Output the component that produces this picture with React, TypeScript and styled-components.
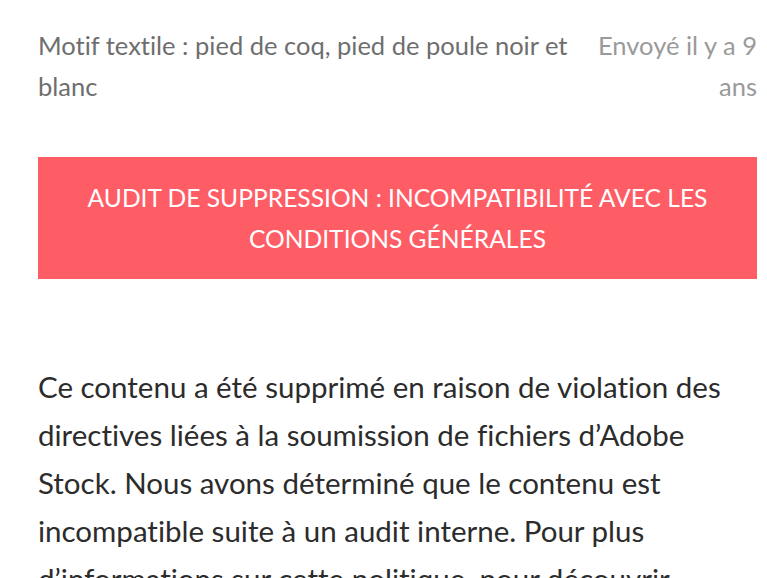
import React from "react";
import styled, { createGlobalStyle } from "styled-components";

const GlobalStyle = createGlobalStyle`
  html, body {
    margin: 0;
    padding: 0;
    background: #ffffff;
    overflow: hidden;
  }
  body {
    font-family: Lato, "Open Sans", "Liberation Sans", sans-serif;
    font-variant-ligatures: none;
  }
`;

const Page = styled.div`
  width: 767px;
  height: 578px;
  box-sizing: border-box;
  padding: 25px 10px 0 38px;
  overflow: hidden;
`;

const Header = styled.div`
  display: flex;
  align-items: flex-start;
  justify-content: space-between;
  gap: 18px;
`;

const Title = styled.div`
  flex: 1;
  font-size: 25.5px;
  line-height: 41px;
  color: #6e6e6e;
`;

const SentAt = styled.div`
  width: 166px;
  flex-shrink: 0;
  text-align: right;
  font-size: 25.5px;
  line-height: 41px;
  color: #9a9a9a;
`;

const Banner = styled.div`
  margin-top: 50px;
  background: #ff5d66;
  color: #ffffff;
  text-transform: uppercase;
  text-align: center;
  font-size: 24.6px;
  line-height: 41px;
  padding: 20px 40px;
`;

const Message = styled.p`
  margin: 84px 0 0;
  padding-right: 24px;
  font-size: 29.5px;
  line-height: 48px;
  color: #2c2c2c;
`;

export default function App() {
  return (
    <React.Fragment>
      <GlobalStyle />
      <Page>
        <Header>
          <Title>Motif textile : pied de coq, pied de poule noir et blanc</Title>
          <SentAt>Envoyé il y a 9 ans</SentAt>
        </Header>
        <Banner>Audit de suppression : incompatibilité avec les conditions générales</Banner>
        <Message>
          Ce contenu a été supprimé en raison de violation des directives liées à la
          soumission de fichiers d’Adobe Stock. Nous avons déterminé que le contenu est
          incompatible suite à un audit interne. Pour plus d’informations sur cette
          politique, pour découvrir
        </Message>
      </Page>
    </React.Fragment>
  );
}
